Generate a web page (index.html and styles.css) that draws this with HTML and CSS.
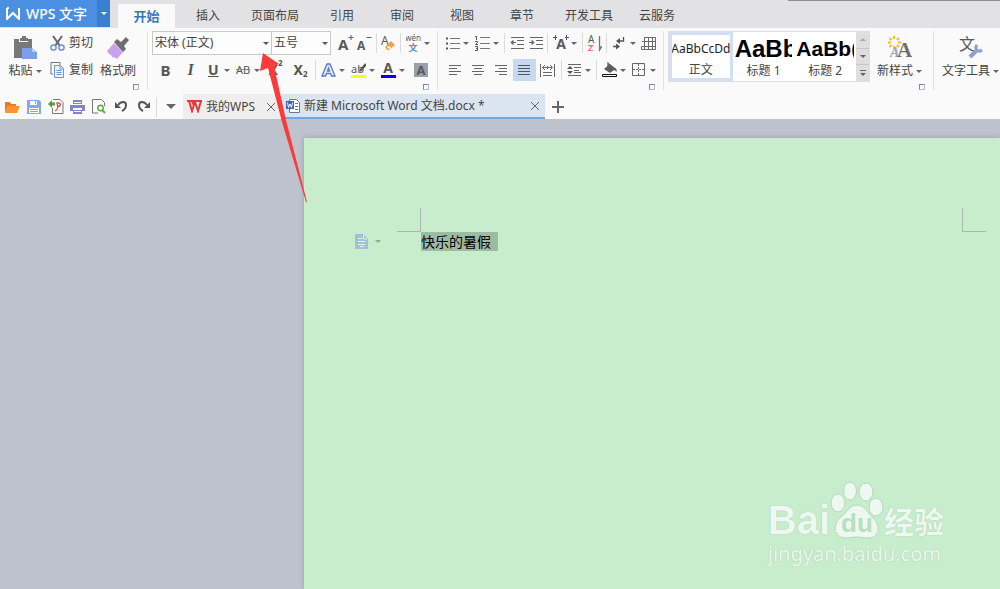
FILE: index.html
```html
<!DOCTYPE html>
<html lang="zh-CN">
  <head>
    <meta charset="UTF-8" />
    <meta name="viewport" content="width=device-width, initial-scale=1.0" />
    <title>WPS 文字</title>
    <link rel="stylesheet" href="styles.css">
  </head>
  <body>
    <header class="titlebar">
      <button class="app-button">
        <svg width="15" height="13" viewBox="0 0 15 13" fill="none" stroke="#fff" stroke-width="2"><path d="M1 1v11l6-6 6 6V1M1 1h2"/></svg>
        <span>WPS 文字</span>
      </button>
      <button class="app-menu" aria-label="菜单"><span class="caret"></span></button>
      <nav class="menu">
        <button class="active">开始</button>
        <button>插入</button>
        <button>页面布局</button>
        <button>引用</button>
        <button>审阅</button>
        <button>视图</button>
        <button>章节</button>
        <button>开发工具</button>
        <button>云服务</button>
      </nav>
      <span class="window-edge"></span>
    </header>

    <div class="ribbon">
      <!-- Presse-papiers -->
      <section class="group clipboard">
        <div class="group-body">
          <button class="big">
            <svg width="24" height="24" viewBox="0 0 24 24"><path fill="#787878" d="M1 3h5v3h9V3h4v9h-8v10H1z"/><path fill="#787878" d="M7 2h2V0h4v2h2v3H7z"/><path fill="#7b9fe8" d="M9 12h10l5 4v7H9z"/><path fill="#b9cdf6" d="M19 12l5 4h-5z"/><path fill="#787878" d="M1 8h18v3H8v11H1z"/></svg>
            <span>粘贴 <i class="caret"></i></span>
          </button>
          <div class="stack">
            <button>
              <svg width="15" height="16" viewBox="0 0 15 16" fill="none"><path stroke="#666" stroke-width="2" d="M3 1l7 10M12 1L5 11"/><circle cx="3.5" cy="12.5" r="2.6" stroke="#6c93dd" stroke-width="1.5"/><circle cx="11.5" cy="12.5" r="2.6" stroke="#6c93dd" stroke-width="1.5"/></svg>
              剪切
            </button>
            <button>
              <svg width="15" height="16" viewBox="0 0 15 16" fill="none"><path stroke="#777" d="M3 12H1V.500h9V3"/><path fill="#eef3fd" stroke="#6c93dd" d="M4.500 3.500h6l3 3v9h-9zM10 4v3h3M6.500 8.500h5M6.500 10.500h5M6.500 12.500h5"/></svg>
              复制
            </button>
          </div>
          <button class="big">
            <svg width="24" height="24" viewBox="0 0 24 24"><path fill="#6f6f6f" d="M8 6l3-3 4 3 5-5 3 3-5 6 2 3-3 3z"/><path fill="#c9a2ee" d="M8 7l9 9-6 7-3-2-1 1-2-3-2-1-2-3z"/></svg>
            <span>格式刷</span>
          </button>
        </div>
        <button class="launcher" aria-label="剪贴板"></button>
      </section>

      <!-- Police -->
      <section class="group">
        <div class="row">
          <label class="combo font-name">
            <select aria-label="字体"><option>宋体 (正文)</option></select>
          </label>
          <label class="combo font-size">
            <select aria-label="字号"><option>五号</option></select>
          </label>
          <button class="tool grow-font" aria-label="增大字号"><svg width="16" height="16" viewBox="0 0 16 16"><text class="glyph" x="0" y="15" font-size="15">A</text><path stroke="#5f5f5f" d="M13 0v5M10.500 2.500h5"/></svg></button>
          <button class="tool" aria-label="减小字号"><svg width="15" height="16" viewBox="0 0 15 16"><text class="glyph" x="0" y="15" font-size="12">A</text><path stroke="#5f5f5f" d="M9.500 2.500h5"/></svg></button>
          <span class="sep"></span>
          <button class="tool" aria-label="清除格式"><svg width="15" height="16" viewBox="0 0 15 16"><text class="glyph thin" x="0" y="10" font-size="12">A</text><path fill="#f3a24f" d="M4 12l6-6 4 4-6 5H6z"/><path fill="#fff" d="M6 12l2-1 2 2-2 1z"/></svg></button>
          <span class="sep"></span>
          <button class="tool drop" aria-label="拼音指南"><svg width="15" height="18" viewBox="0 0 15 18"><text class="glyph thin" x="7" y="7" font-size="8" text-anchor="middle">wén</text><text class="glyph blue" x="7" y="17" font-size="9" text-anchor="middle">文</text></svg><span class="caret"></span></button>
        </div>
        <div class="row letters">
          <button class="tool"><b>B</b></button>
          <button class="tool"><em>I</em></button>
          <button class="tool drop"><u>U</u><span class="caret"></span></button>
          <button class="tool drop"><s>AB</s><span class="caret"></span></button>
          <button class="tool script">X<sup>2</sup></button>
          <button class="tool script">X<sub>2</sub></button>
          <span class="sep"></span>
          <button class="tool drop" aria-label="文字效果"><svg width="15" height="15" viewBox="0 0 15 15"><path fill="#e5edfb" stroke="#5479cf" stroke-width="1.300" d="M1 13L6 1h3l5 12h-3.500l-1-2.500h-4l-1 2.500zM6.500 8h2l-1-3z"/></svg><span class="caret"></span></button>
          <button class="tool drop" aria-label="突出显示"><svg width="15" height="16" viewBox="0 0 15 16"><path fill="#ff0" d="M0 13h15v3H0z"/><text class="glyph thin" x="0" y="11" font-size="11">ab</text><path stroke="#555" stroke-width="2.500" d="M15 2L9 9"/></svg><span class="caret"></span></button>
          <button class="tool drop" aria-label="字体颜色"><svg width="15" height="16" viewBox="0 0 15 16"><path fill="#00f" d="M0 13h15v3H0z"/><text class="glyph" x="7" y="11" font-size="14" text-anchor="middle">A</text></svg><span class="caret"></span></button>
          <button class="tool" aria-label="字符底纹"><svg width="14" height="14" viewBox="0 0 14 14"><path fill="#9aa0a8" d="M0 0h14v14H0z"/><text class="glyph" x="7" y="12" font-size="13" text-anchor="middle">A</text></svg></button>
        </div>
        <button class="launcher" aria-label="字体"></button>
      </section>

      <!-- Paragraphe -->
      <section class="group">
        <div class="row">
          <button class="tool drop" aria-label="项目符号"><svg width="15" height="14" viewBox="0 0 15 14"><path stroke="#777" d="M5 2.500h10M5 7.500h10M5 12.500h10"/><path stroke="#555" stroke-width="2" d="M1 2.500h2M1 7.500h2M1 12.500h2"/></svg><span class="caret"></span></button>
          <button class="tool drop" aria-label="编号"><svg width="15" height="16" viewBox="0 0 15 16" fill="none"><path stroke="#777" d="M5 2.500h10M5 8.500h10M5 13.500h10"/><path stroke="#555" d="M0 1.500h1.500V5M0 6.500h2.500v1L.500 9.500H3M0 11.500h2.500v4H0M1 13.500h1"/></svg><span class="caret"></span></button>
          <span class="sep"></span>
          <button class="tool" aria-label="减少缩进"><svg width="14" height="14" viewBox="0 0 14 14" fill="none" stroke="#666"><path d="M1 1.500h13M7 4.500h7M7 8.500h7M1 12.500h13"/><path fill="#555" d="M6 6.500H1l2-2v4l-2-2"/></svg></button>
          <button class="tool" aria-label="增加缩进"><svg width="14" height="14" viewBox="0 0 14 14" fill="none" stroke="#666"><path d="M1 1.500h13M7 4.500h7M7 8.500h7M1 12.500h13"/><path fill="#555" d="M0 6.500h5l-2-2v4l2-2"/></svg></button>
          <span class="sep"></span>
          <button class="tool drop" aria-label="中文版式"><svg width="16" height="16" viewBox="0 0 16 16"><text class="glyph" x="8" y="14" font-size="14" text-anchor="middle">A</text><path stroke="#555" d="M0 2.500h4M2.500 0v5M12 2.500h4M13.500 0v5"/></svg><span class="caret"></span></button>
          <span class="sep"></span>
          <button class="tool" aria-label="排序"><svg width="15" height="17" viewBox="0 0 15 17"><text class="glyph thin" x="1" y="8" font-size="10">A</text><text class="glyph red" x="1" y="16" font-size="9">Z</text><path fill="none" stroke="#777" stroke-width="1.300" d="M12.500 1v14l2-3h-2"/></svg></button>
          <span class="sep"></span>
          <button class="tool drop" aria-label="显示段落标记"><svg width="14" height="14" viewBox="0 0 14 14" fill="none" stroke="#555"><path stroke-width="1.300" d="M11.500 1v4H6M1 10.500h6"/><path fill="#555" stroke="none" d="M8 2v6L4 5zM4 7.500v6l4-3z"/></svg><span class="caret"></span></button>
          <button class="tool" aria-label="插入表格"><svg width="15" height="15" viewBox="0 0 15 15" fill="none" stroke="#6b6b6b"><path d="M3.500 1.500h11v12H.500v-3h14M1 5.500h13.500M3.500 1v12.500M7.500 1.500v12M11.500 1.500v12"/></svg></button>
        </div>
        <div class="row align">
          <button class="tool" aria-label="左对齐"><svg width="13" height="12" viewBox="0 0 13 12" stroke="#666"><path d="M0 1.500h12M0 4.500h8M0 7.500h12M0 10.500h8"/></svg></button>
          <button class="tool" aria-label="居中"><svg width="13" height="12" viewBox="0 0 13 12" stroke="#666"><path d="M0 1.500h12M2 4.500h8M0 7.500h12M2 10.500h8"/></svg></button>
          <button class="tool" aria-label="右对齐"><svg width="13" height="12" viewBox="0 0 13 12" stroke="#666"><path d="M0 1.500h12M4 4.500h8M0 7.500h12M4 10.500h8"/></svg></button>
          <button class="tool pressed" aria-label="两端对齐"><svg width="13" height="12" viewBox="0 0 13 12" stroke="#555"><path d="M0 1.500h12M0 4.500h12M0 7.500h12M0 10.500h12"/></svg></button>
          <button class="tool" aria-label="分散对齐"><svg width="15" height="13" viewBox="0 0 15 13" fill="none" stroke="#666"><path d="M.500 0v13M14.500 0v13M3 8.500h9M3 11.500h9M2.500 3.500h10M5 1L2.500 3.500 5 6M10 1l2.500 2.500L10 6M7.500 2v3"/></svg></button>
          <span class="sep"></span>
          <button class="tool drop" aria-label="行距"><svg width="15" height="14" viewBox="0 0 15 14" stroke="#666"><path d="M1 1.500h13M7 4.500h7M7 7.500h5M7 9.500h7M1 12.500h13"/><path fill="#555" stroke="none" d="M0 6l3-3 3 3zM0 8h6l-3 3z"/></svg><span class="caret"></span></button>
          <span class="sep"></span>
          <button class="tool drop" aria-label="底纹颜色"><svg width="15" height="16" viewBox="0 0 15 16" fill="none"><path fill="#5c5c5c" d="M2 7l6-5 5 4c2 0 2 4 1 4 0-1-1-2-2-2l-4 3z"/><path stroke="#5c5c5c" stroke-width="1.200" d="M6 5V1l3 4"/><path fill="#fff" stroke="#111" d="M.500 12.500h14v2H.500z"/></svg><span class="caret"></span></button>
          <button class="tool drop" aria-label="边框"><svg width="14" height="14" viewBox="0 0 14 14" fill="none" stroke="#666"><path d="M.500.500h12v12H.500z"/><path stroke-dasharray="2 1" d="M6.500 1v12M1 6.500h12"/></svg><span class="caret"></span></button>
        </div>
        <button class="launcher" aria-label="段落"></button>
      </section>

      <!-- Styles -->
      <section class="group">
        <div class="group-body">
          <div class="gallery">
            <button class="style selected"><span class="sample">AaBbCcDd</span><span>正文</span></button>
            <button class="style"><span class="sample heading1">AaBb</span><span>标题 1</span></button>
            <button class="style"><span class="sample heading2">AaBb(</span><span>标题 2</span></button>
            <div class="gallery-scroll">
              <button aria-label="上一行"><span class="caret up"></span></button>
              <button aria-label="下一行"><span class="caret"></span></button>
              <button class="more" aria-label="更多样式"><span class="caret"></span></button>
            </div>
          </div>
          <button class="big new-style">
            <svg width="24" height="24" viewBox="0 0 24 24"><path stroke="#fbb828" stroke-width="2" d="M6 0v3M6 10v3M0 6.500h3M10 6.500h3M1.500 2l2 2M9 9l2 2M11 2L9 4M3.500 9l-2 2"/><text class="glyph serif light" x="2" y="21" font-size="14">A</text><text class="glyph serif" x="9" y="21" font-size="21">A</text></svg>
            <span>新样式 <i class="caret"></i></span>
          </button>
        </div>
        <button class="launcher" aria-label="样式"></button>
      </section>

      <section class="group tools">
        <div class="group-body">
          <button class="big">
            <svg width="24" height="24" viewBox="0 0 24 24" fill="none"><text class="glyph thin" x="0" y="14" font-size="16">文</text><path stroke="#8f9fd0" stroke-width="4" d="M11 21l6-6"/><path stroke="#8f9fd0" stroke-width="3" d="M18 9c-3 4 1 8 5 5"/></svg>
            <span>文字工具 <i class="caret"></i></span>
          </button>
        </div>
      </section>
    </div>

    <div class="tabbar">
      <div class="quick">
        <button aria-label="打开"><svg width="16" height="14" viewBox="0 0 16 14"><path fill="#ee7a1b" d="M1 13V2h5l1 2h5v2H4z"/><path fill="#fb9434" d="M4 6h12l-3 7H1z"/></svg></button>
        <button aria-label="保存"><svg width="14" height="14" viewBox="0 0 14 14"><path fill="#7fa8f0" d="M0 0h12l2 2v12H0z"/><path fill="#fff" d="M3 1h7v4H3zM2 8h10v5H2z"/><path stroke="#7fa8f0" d="M8.500 1v3M3 9.500h8M3 11.500h8"/></svg></button>
        <button aria-label="输出为PDF"><svg width="16" height="15" viewBox="0 0 16 15" fill="none"><path stroke="#777" d="M5 .500h7l3 3v11H4.500V9"/><path stroke="#d94848" stroke-width="1.300" d="M7 12c3-1 3-5 2-8 4-1 5 3 0 4"/><path fill="#51a03a" d="M0 5l4-4v2.500h3v3H4V9z"/></svg></button>
        <button aria-label="打印"><svg width="15" height="14" viewBox="0 0 15 14"><path fill="#8583c8" d="M3 0h9v4H3zM0 5h15v6H0z"/><path fill="#fafafa" d="M4 2h7v1H4zM3 8h9v2H3z"/><path fill="#8583c8" d="M3 10h9v4H3z"/><path fill="#fafafa" d="M4 11h7v1H4z"/></svg></button>
        <button aria-label="打印预览"><svg width="14" height="15" viewBox="0 0 14 15" fill="none"><path stroke="#777" d="M6 14H.500V.500h9l3 3V7"/><circle cx="8.500" cy="9" r="2.700" stroke="#62ab46" stroke-width="1.500"/><path stroke="#62ab46" stroke-width="2" d="M10 11l3 3"/></svg></button>
        <button aria-label="撤销"><svg width="13" height="13" viewBox="0 0 13 13" fill="none"><path fill="#555" d="M0 2v6h6z"/><path stroke="#555" stroke-width="2" d="M3 5c3-4 8-4 8 0 0 3-2 5-4 6"/></svg></button>
        <button aria-label="恢复"><svg width="13" height="13" viewBox="0 0 13 13" fill="none"><path fill="#555" d="M13 2v6H7z"/><path stroke="#555" stroke-width="2" d="M10 5C7 1 2 1 2 5c0 3 2 5 4 6"/></svg></button>
        <span class="sep"></span>
        <button class="more-quick" aria-label="自定义"><span class="caret large"></span></button>
      </div>
      <div class="doc-tab">
        <svg width="15" height="13" viewBox="0 0 15 13" fill="none" stroke="#e5393c" stroke-width="2"><path d="M0 1h15M2 1l3 10 3-9 3 9 3-10M5 1l2 5"/></svg>
        <span>我的WPS</span>
        <button class="close" aria-label="关闭"><svg width="8" height="8" viewBox="0 0 8 8" stroke="#666"><path d="M0 0l8 8M8 0L0 8"/></svg></button>
      </div>
      <div class="doc-tab current">
        <svg width="14" height="14" viewBox="0 0 14 14" fill="none"><path fill="#fff" stroke="#6b7690" d="M3.500.500h7l3 3v10h-10z"/><path stroke="#6b7690" d="M9 4.500h3M9 7.500h3M9 10.500h3"/><path fill="#3f60b5" d="M0 2h8v8H0z"/><path stroke="#fff" d="M1.500 3.500l1 5L4 5l1.500 3.500 1-5"/></svg>
        <span>新建 Microsoft Word 文档.docx *</span>
        <button class="close" aria-label="关闭"><svg width="8" height="8" viewBox="0 0 8 8" stroke="#666"><path d="M0 0l8 8M8 0L0 8"/></svg></button>
      </div>
      <button class="new-tab" aria-label="新建"><svg width="12" height="12" viewBox="0 0 12 12" stroke="#666" stroke-width="2"><path d="M6 0v12M0 6h12"/></svg></button>
    </div>

    <main class="workspace">
      <article class="page">
        <div class="crop left"></div>
        <div class="crop right"></div>
        <div class="gutter">
          <svg width="14" height="15" viewBox="0 0 14 15" fill="none"><path fill="#9fc3d3" d="M0 0h8l5 5v10H0z"/><path stroke="#e3f5ec" d="M3 4.500h4M3 7.500h7M3 10.500h7M8.500 1v4H12M5 12.500h4"/></svg>
          <span class="caret"></span>
        </div>
        <p class="text"><mark>快乐的暑假</mark></p>
      </article>
      <div class="watermark">
        <div class="brand">
          <span class="bai">Bai</span>
          <svg width="54" height="58" viewBox="0 0 54 58"><g fill="#edf8f0" stroke="#b5d9bd"><ellipse cx="8" cy="22" rx="7" ry="9"/><ellipse cx="20" cy="10" rx="6.500" ry="9"/><ellipse cx="36" cy="11" rx="7" ry="9"/><ellipse cx="46" cy="26" rx="7" ry="9"/><path d="M27 24c8 0 10 8 16 13 8 7 7 20-5 20-5 0-7-1-11-1s-7 1-11 1C4 57 2 44 10 37c7-5 9-13 17-13z"/></g><text x="27" y="51" text-anchor="middle" class="du">du</text></svg>
          <span class="jingyan">经验</span>
        </div>
        <div class="site">jingyan.baidu.com</div>
      </div>
    </main>

    <!-- flèche vers la liste des polices -->
    <svg class="arrow" width="50" height="152" viewBox="0 0 50 152"><path fill="#fb3a3a" d="M4 1l16 11-5 2 12 54 21 82h-1L23 70 9 16l-8 3z"/></svg>
  </body>
</html>
```

FILE: styles.css
```css
* {
  box-sizing: border-box;
}

body {
  margin: 0;
  min-height: 100vh;
  display: flex;
  flex-direction: column;
  position: relative;
  overflow: hidden;
  font-family: "Noto Sans", "Noto Sans CJK SC", sans-serif;
  font-size: 12px;
  line-height: 16px;
  color: #444;
  background-color: #fafafa;
}

button {
  display: flex;
  align-items: center;
  justify-content: center;
  margin: 0;
  padding: 0;
  border: none;
  background: none;
  font: inherit;
  color: inherit;
  white-space: nowrap;
  cursor: pointer;
}

svg {
  flex: none;
}

.glyph {
  fill: #5a5a5a;
  font-weight: bold;
}

.glyph.thin {
  font-weight: normal;
}

.glyph.blue {
  fill: #5b86d6;
}

.glyph.red {
  fill: #ee6d70;
}

.glyph.serif {
  font-family: "Liberation Serif", serif;
  fill: #6f6f6f;
}

.glyph.light {
  font-style: italic;
  fill: #a5a5a5;
}

.caret {
  display: inline-block;
  flex: none;
  border: 3px solid transparent;
  border-top-color: #666;
  border-bottom: none;
}

.caret.up {
  border-top: none;
  border-bottom: 3px solid #aaa;
}

.caret.large {
  border-width: 5px;
  border-bottom: none;
}

.sep {
  flex: none;
  width: 1px;
  height: 20px;
  margin: 0 2px;
  background-color: #dcdcdc;
}

/* barre de titre */
.titlebar {
  display: flex;
  height: 28px;
  background-color: #e2e2e4;
}

.app-button {
  width: 97px;
  height: 27px;
  padding-right: 4px;
  gap: 5px;
  background-color: #4b8fe3;
  color: #fff;
  font-size: 14px;
  font-weight: 500;
}

.app-menu {
  width: 13px;
  height: 27px;
  background-color: #3c7fd0;
}

.app-menu .caret {
  border-top-color: #fff;
}

.menu {
  display: flex;
  align-items: flex-end;
  padding-left: 8px;
}

.menu button {
  min-width: 60px;
  height: 24px;
  padding: 0 13px;
}

.menu .active {
  min-width: 57px;
  margin-right: 3px;
  background-color: #fafafa;
  color: #3a78bd;
  font-size: 13px;
  font-weight: bold;
}

.window-edge {
  flex: 1;
  height: 1px;
  margin-left: 100px;
  background-color: #8e8e92;
}

/* ruban */
.ribbon {
  display: flex;
  padding: 3px 0;
}

.group {
  display: flex;
  flex: none;
  flex-direction: column;
  height: 59px;
  padding: 0 4px;
  border-right: 1px solid #e0e0e0;
}

.tools {
  padding-left: 8px;
  border-right: none;
}

.group-body {
  display: flex;
  height: 51px;
}

.row {
  display: flex;
  align-items: center;
  height: 24px;
  margin-bottom: 3px;
}

.launcher {
  align-self: flex-end;
  width: 6px;
  height: 6px;
  margin-top: 2px;
  margin-right: 4px;
  border: 1px solid #7a88ab;
  border-right-color: #b4bccf;
  border-bottom-color: #b4bccf;
}

.row + .launcher {
  margin-top: -1px;
}

.big {
  flex-direction: column;
  justify-content: flex-end;
  gap: 3px;
  padding-bottom: 3px;
}

.big .caret {
  vertical-align: middle;
}

.clipboard {
  width: 148px;
  padding-left: 5px;
}

.clipboard .group-body {
  gap: 5px;
}

.clipboard .big {
  width: 40px;
}

.stack {
  display: flex;
  flex-direction: column;
  gap: 4px;
}

.stack button {
  height: 24px;
  gap: 4px;
}

.combo {
  position: relative;
  height: 24px;
}

.combo select {
  appearance: none;
  width: 100%;
  height: 24px;
  padding: 0 2px;
  border: 1px solid #c8c8c8;
  border-radius: 0;
  background-color: #fdfdfd;
  font: inherit;
  color: inherit;
}

.combo::after {
  content: "";
  position: absolute;
  top: 11px;
  right: 3px;
  border: 3px solid transparent;
  border-top-color: #555;
  border-bottom: none;
  pointer-events: none;
}

.font-name {
  width: 120px;
}

.font-size {
  width: 60px;
  margin-left: -1px;
}

.tool {
  flex: none;
  width: 19px;
  height: 22px;
}

.drop {
  width: 30px;
  justify-content: space-between;
  padding: 0 3px;
}

.grow-font {
  margin-left: 5px;
}

.letters {
  padding-left: 1px;
  color: #555;
  font-size: 15px;
}

.letters .tool {
  width: 25px;
}

.letters .drop {
  width: 30px;
}

.letters em {
  font-family: "Liberation Serif", serif;
  font-size: 16px;
  font-weight: bold;
}

.letters u {
  padding-left: 2px;
  font-size: 14px;
  font-weight: bold;
}

.letters s {
  font-size: 11px;
  text-decoration-color: #e0605f;
}

.letters .script {
  font-size: 14px;
  font-weight: bold;
}

.script sup,
.script sub {
  font-size: 8px;
  line-height: 8px;
}

.script sup {
  align-self: flex-start;
}

.script sub {
  align-self: flex-end;
  padding-bottom: 3px;
}

.align {
  padding-left: 2px;
}

.align .tool {
  width: 23px;
}

.align .drop {
  width: 30px;
}

.pressed {
  background-color: #c7d9f1;
}

/* galerie des styles */
.gallery {
  display: flex;
  width: 202px;
  border: 1px solid #dedede;
  background-color: #fff;
}

.style {
  flex: 1;
  flex-direction: column;
  justify-content: flex-end;
  min-width: 0;
  padding: 0 2px 2px;
}

.style.selected {
  padding: 0;
  border: 3px solid #d3dff5;
}

.style.selected .sample {
  justify-content: center;
}

.sample {
  display: flex;
  align-items: center;
  width: 100%;
  height: 28px;
  overflow: hidden;
  color: #222;
}

.heading1,
.heading2 {
  font-family: "Liberation Sans", Arial, sans-serif;
  font-weight: bold;
  color: #000;
}

.heading1 {
  font-size: 24px;
}

.heading2 {
  font-size: 21px;
}

.gallery-scroll {
  display: flex;
  flex-direction: column;
  gap: 1px;
  width: 13px;
  background-color: #c8c8c8;
}

.gallery-scroll button {
  flex: 1;
  background-color: #dedede;
}

.gallery-scroll .more {
  flex-direction: column;
  gap: 2px;
}

.more::before {
  content: "";
  width: 6px;
  height: 1px;
  background-color: #666;
}

.new-style {
  width: 59px;
}

/* barre des documents */
.tabbar {
  display: flex;
  height: 26px;
  padding-top: 1px;
}

.quick {
  display: flex;
  align-items: center;
  width: 183px;
  padding-left: 1px;
}

.quick button {
  width: 22px;
  height: 22px;
}

.quick .more-quick {
  width: 24px;
}

.doc-tab {
  display: flex;
  align-items: center;
  gap: 4px;
  width: 98px;
  padding-left: 4px;
  background-color: #eeeeef;
}

.doc-tab .close {
  width: 14px;
  height: 14px;
  margin-left: auto;
  margin-right: 3px;
}

.doc-tab.current {
  width: 264px;
  padding-left: 5px;
  border-bottom: 2px solid #7ba5df;
  background-color: #dbe5f2;
}

.new-tab {
  width: 26px;
}

/* zone du document */
.workspace {
  position: relative;
  flex: 1;
  display: flex;
  padding: 19px 0 0 304px;
  background-color: #bec2cc;
}

.page {
  flex: 1;
  display: grid;
  grid-template-columns: 117px 1fr 38px;
  grid-template-rows: 94px 1fr;
  background-color: #c8edcd;
  box-shadow: 0 0 5px #9b9da9;
}

.crop {
  align-self: end;
  width: 24px;
  height: 24px;
  border-bottom: 1px solid #a9b9ad;
}

.crop.left {
  justify-self: end;
  border-right: 1px solid #a9b9ad;
}

.crop.right {
  grid-column: 3;
  border-left: 1px solid #a9b9ad;
}

.gutter {
  display: flex;
  align-items: center;
  gap: 6px;
  height: 18px;
  padding-left: 51px;
}

.gutter .caret {
  border-top-color: #8fa895;
}

.text {
  margin: 0;
  color: #000;
  font-size: 14px;
  line-height: 19px;
}

.text mark {
  display: inline-block;
  padding-right: 7px;
  background-color: #9fbaa4;
  color: inherit;
}

.watermark {
  position: absolute;
  right: 56px;
  bottom: 23px;
  color: #edf8f0;
  text-shadow: 0 0 1px #8dba98;
}

.brand {
  display: flex;
  align-items: flex-end;
}

.bai {
  font-family: "Liberation Sans", Arial, sans-serif;
  font-size: 40px;
  font-weight: bold;
  line-height: 38px;
}

.du {
  font-family: "Liberation Sans", Arial, sans-serif;
  font-size: 26px;
  font-weight: bold;
  fill: #b9dfc1;
  text-shadow: none;
}

.jingyan {
  font-size: 30px;
  font-weight: bold;
  line-height: 34px;
}

.site {
  padding-top: 3px;
  font-size: 20px;
  line-height: 24px;
}

.arrow {
  position: absolute;
  top: 52px;
  left: 259px;
  pointer-events: none;
}
```
